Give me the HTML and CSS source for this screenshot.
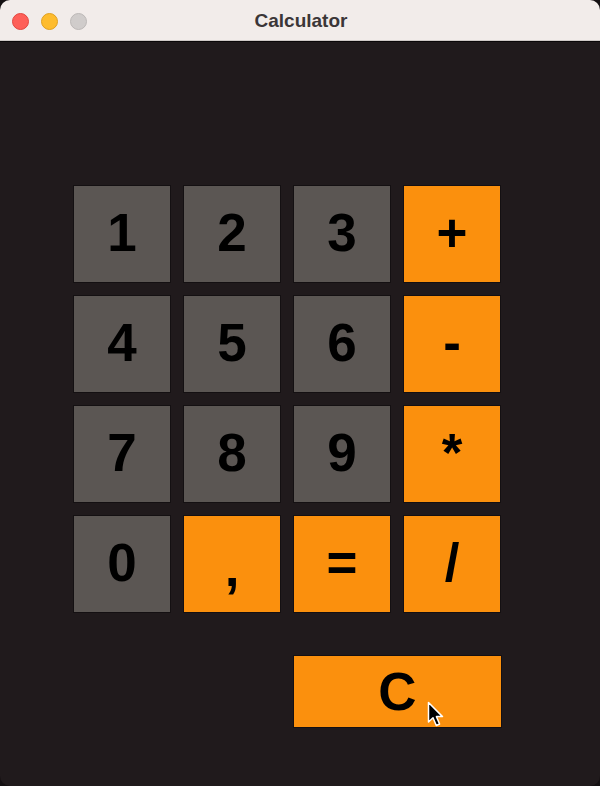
FILE: index.html
```html
<!DOCTYPE html>
<html>
<head>
<meta charset="utf-8">
<link rel="stylesheet" href="styles.css">
</head>
<body>
<div class="window">
  <div class="titlebar">
    <div class="lights">
      <span class="light red"></span>
      <span class="light yellow"></span>
      <span class="light gray"></span>
    </div>
    <div class="title">Calculator</div>
  </div>
  <div class="content">
    <div class="keypad">
      <div class="key num">1</div>
      <div class="key num">2</div>
      <div class="key num">3</div>
      <div class="key op">+</div>
      <div class="key num">4</div>
      <div class="key num">5</div>
      <div class="key num">6</div>
      <div class="key op">-</div>
      <div class="key num">7</div>
      <div class="key num">8</div>
      <div class="key num">9</div>
      <div class="key op">*</div>
      <div class="key num">0</div>
      <div class="key op comma">,</div>
      <div class="key op">=</div>
      <div class="key op">/</div>
    </div>
    <div class="clear-row">
      <div class="key op clear">C</div>
    </div>
    <svg class="cursor" width="20" height="28" viewBox="0 0 20 28">
      <path d="M1.5 1.5 L1.5 21 L6 16.8 L9.3 24.5 L12.6 23 L9.4 15.6 L15.5 15.6 Z" fill="#000" stroke="#fff" stroke-width="1.5" stroke-linejoin="round"/>
    </svg>
  </div>
</div>
</body>
</html>
```

FILE: styles.css
```css
html, body {
  margin: 0;
  padding: 0;
  background: #141012;
}
body {
  width: 600px;
  height: 786px;
  overflow: hidden;
  font-family: "Liberation Sans", Arial, sans-serif;
}
.window {
  width: 600px;
  height: 786px;
  background: #201a1c;
  border-radius: 10px;
  overflow: hidden;
  display: flex;
  flex-direction: column;
}
.titlebar {
  height: 40px;
  background: #f2ecea;
  border-bottom: 1px solid #cfc9c7;
  box-shadow: 0 1px 0 #0b0809;
  display: flex;
  align-items: center;
  position: relative;
  flex: none;
}
.lights {
  display: flex;
  gap: 12px;
  padding-left: 12px;
  padding-top: 2px;
}
.light {
  width: 17px;
  height: 17px;
  border-radius: 50%;
  box-sizing: border-box;
}
.red { background: #fe5f58; border: 1px solid #e2463f; }
.yellow { background: #febc2e; border: 1px solid #e0a020; }
.gray { background: #d0cccb; border: 1px solid #bcb8b7; }
.title {
  position: absolute;
  left: 0;
  right: 0;
  top: 0;
  bottom: 0;
  display: flex;
  align-items: center;
  justify-content: center;
  font-weight: bold;
  font-size: 19px;
  color: #3b3637;
  padding-left: 2px;
  padding-top: 1px;
}
.content {
  position: relative;
  flex: 1;
  padding: 145px 0 0 74px;
}
.keypad {
  display: grid;
  grid-template-columns: repeat(4, 96px);
  grid-auto-rows: 96px;
  gap: 14px;
}
.key {
  display: flex;
  align-items: center;
  justify-content: center;
  font-weight: bold;
  font-size: 53px;
  color: #000;
  box-shadow: 0 0 0 1px rgba(0, 0, 0, 0.35);
  padding-bottom: 4px;
  box-sizing: border-box;
}
.num { background: #5b5653; }
.op { background: #fb900d; }
.comma {
  align-items: flex-end;
  padding-bottom: 14px;
}
.clear-row {
  display: flex;
  padding: 44px 0 0 220px;
}
.clear {
  width: 207px;
  height: 71px;
  padding-bottom: 0;
}
.cursor {
  position: absolute;
  left: 427px;
  top: 660px;
}
```
